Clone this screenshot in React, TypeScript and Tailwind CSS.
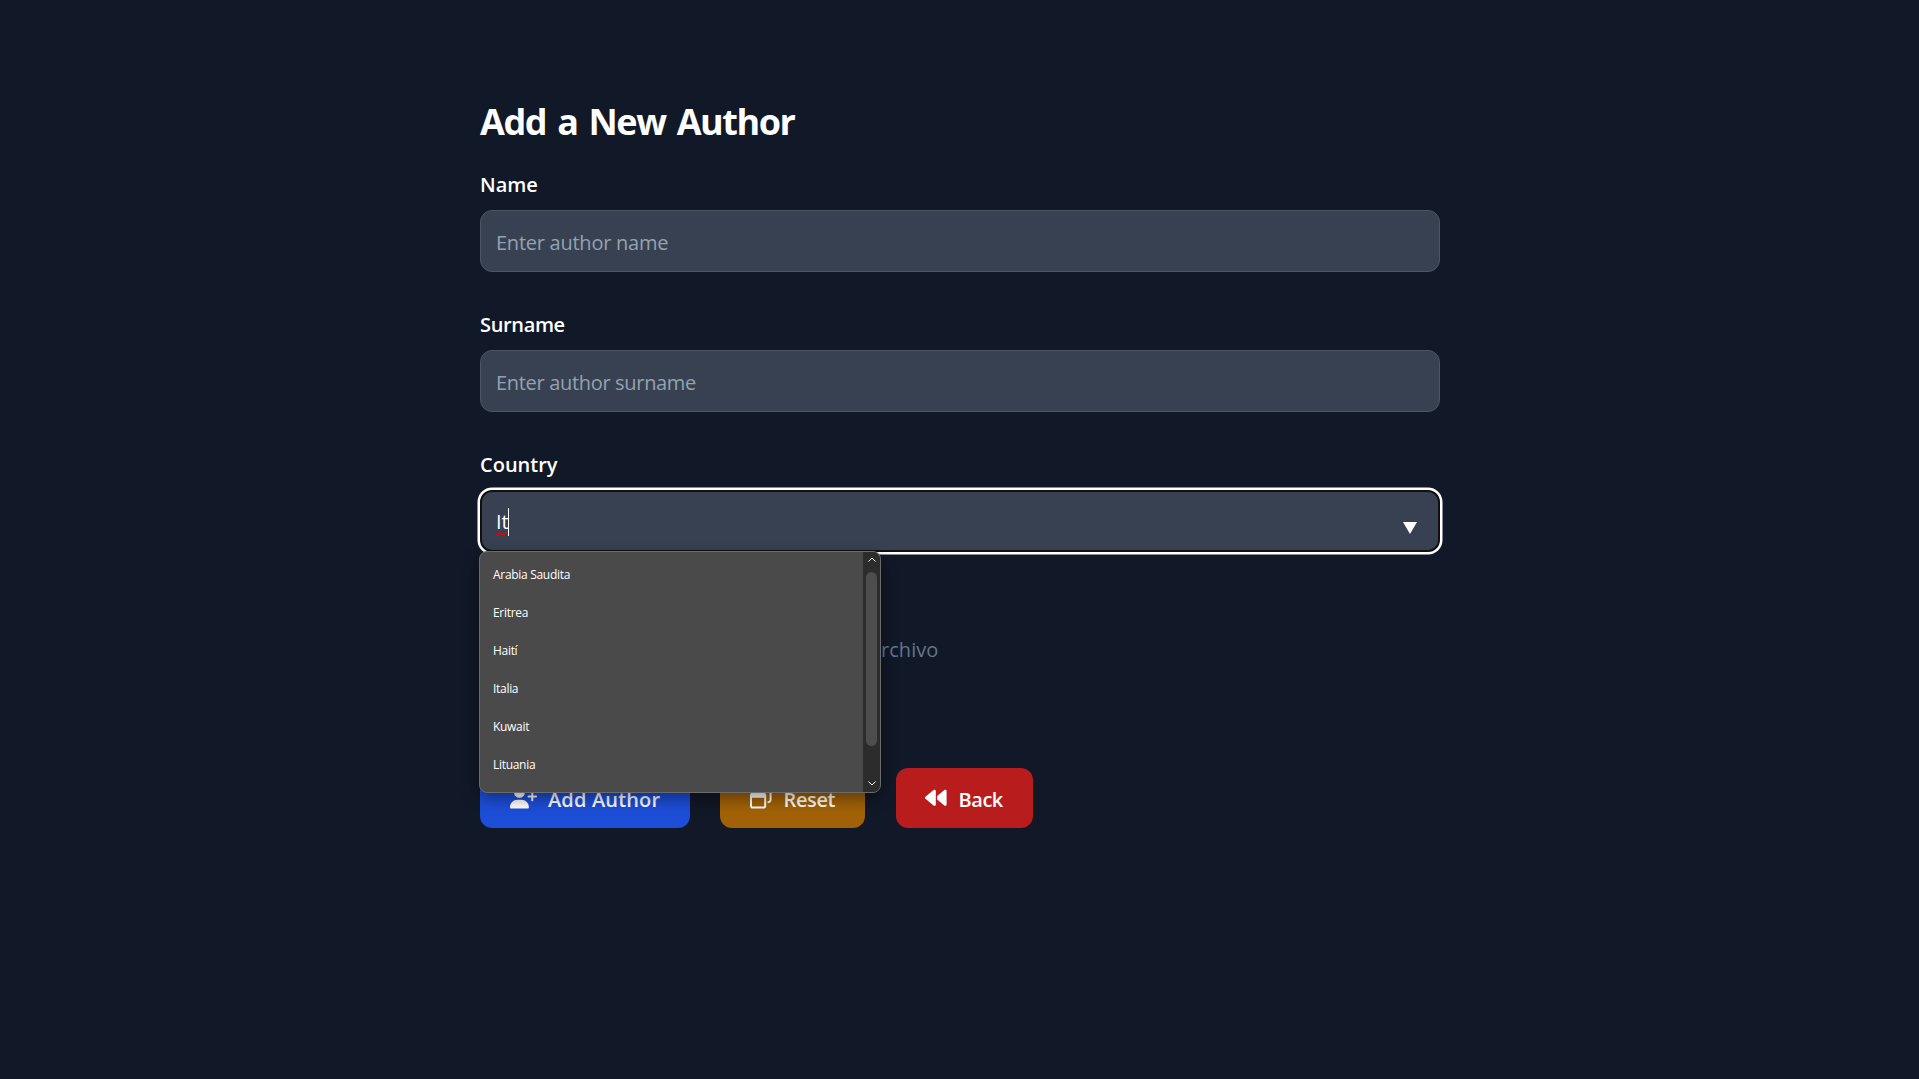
import type { ReactNode } from 'react';
import { FaBackward, FaRegWindowRestore, FaUserPlus } from 'react-icons/fa6';

const countries = ['Arabia Saudita', 'Eritrea', 'Haití', 'Italia', 'Kuwait', 'Lituania'];

function Field({ label, tracking, children }: { label: string; tracking: string; children: ReactNode }) {
  return (
    <div className="mb-[38px]">
      <label className={`mb-[11px] block pt-px text-xl leading-7 font-semibold ${tracking}`}>{label}</label>
      {children}
    </div>
  );
}

function TextBox({ placeholder, tracking }: { placeholder: string; tracking: string }) {
  return (
    <input
      type="text"
      placeholder={placeholder}
      className={`block h-[62px] w-full rounded-xl border border-[#4b5563] bg-[#374151] px-[15px] pt-[17px] pb-[15px] text-xl leading-7 placeholder-[#95a1b0] outline-none ${tracking}`}
    />
  );
}

function Chevron({ down = false }: { down?: boolean }) {
  return (
    <svg viewBox="0 0 8 5" className={`h-[5px] w-2 ${down ? 'rotate-180' : ''}`} fill="none" stroke="#fff" strokeWidth="1">
      <path d="M.5 4.5 4 1l3.5 3.5" />
    </svg>
  );
}

function CountryMenu() {
  return (
    <div className="absolute top-[61px] left-[-1px] z-10 flex h-[242px] w-[402px] overflow-hidden rounded-lg border border-[#6b6b6b] bg-[#4a4a4a] shadow-[0_6px_16px_rgba(0,0,0,0.4)]">
      <ul className="flex-1 pt-1">
        {countries.map((name) => (
          <li key={name} className="flex h-[38px] items-center pl-[13px] text-xs tracking-[-0.3px] text-white">
            {name}
          </li>
        ))}
      </ul>
      <div className="flex w-[17px] flex-col items-center bg-[#2c2c2c] pt-[5px] pb-[6px]">
        <Chevron />
        <div className="mt-[10px] h-[174px] w-[11px] rounded-full bg-[#4d4d4d]" />
        <div className="mt-auto">
          <Chevron down />
        </div>
      </div>
    </div>
  );
}

export default function App() {
  return (
    <main className="min-h-screen bg-[#111827] font-['Open_Sans',sans-serif] text-white">
      <form className="ml-[480px] w-[960px] pt-[102px]">
        <h1 className="mb-7 text-4xl leading-10 font-bold tracking-[-1.45px] [word-spacing:3.2px]">Add a New Author</h1>

        <Field label="Name" tracking="tracking-normal">
          <TextBox placeholder="Enter author name" tracking="tracking-[-0.25px]" />
        </Field>
        <Field label="Surname" tracking="tracking-[-0.35px]">
          <TextBox placeholder="Enter author surname" tracking="tracking-[-0.32px]" />
        </Field>
        <Field label="Country" tracking="tracking-normal">
          <div className="relative">
            <div className="flex h-[62px] items-center justify-between rounded-xl border-2 border-[#101010] bg-[#374151] pr-[21px] pl-[14px] shadow-[0_0_0_2.5px_#fff]">
              <span className="relative flex items-center pt-px text-xl leading-7">
                <span className="pt-px">It</span>
                <span className="-ml-px h-7 w-px bg-white" />
                <svg viewBox="0 0 13 4" className="absolute bottom-0 left-[-1px] h-1 w-[13px]" fill="none" stroke="#e60000" strokeWidth="1.3">
                  <path d="M0 .8 2 3h1L5 1h1l2 2h1l2-2h1l1 1" />
                </svg>
              </span>
              <svg viewBox="0 0 14 12" className="mt-[14px] h-3 w-[14px]" fill="#fff">
                <path d="M0 0h14L7 12z" />
              </svg>
            </div>
            <CountryMenu />
          </div>
        </Field>

        <div className="mb-[104px] flex h-[74px] items-end pl-[390px] text-xl leading-7 text-[#64748b]">
          <span>archivo</span>
        </div>

        <div className="flex gap-[30px] text-xl font-semibold">
          <button type="button" className="flex h-[60px] w-[210px] items-center rounded-xl bg-[#1d4ed8] pl-[30px]">
            <FaUserPlus className="h-[21.6px] w-[27px]" />
            <span className="ml-[11px] pt-[4px] tracking-[0.15px]">Add Author</span>
          </button>
          <button type="button" className="flex h-[60px] w-[145px] items-center rounded-xl bg-[#a16207] pl-[30px]">
            <FaRegWindowRestore className="size-[21.6px]" />
            <span className="ml-3 pt-[4px] tracking-[-0.4px]">Reset</span>
          </button>
          <button type="button" className="ml-px flex h-[60px] w-[137px] items-center rounded-xl bg-[#b91c1c] pl-[29px]">
            <FaBackward className="size-[21.6px]" />
            <span className="ml-3 pt-[4px] tracking-[-0.5px]">Back</span>
          </button>
        </div>
      </form>
    </main>
  );
}
